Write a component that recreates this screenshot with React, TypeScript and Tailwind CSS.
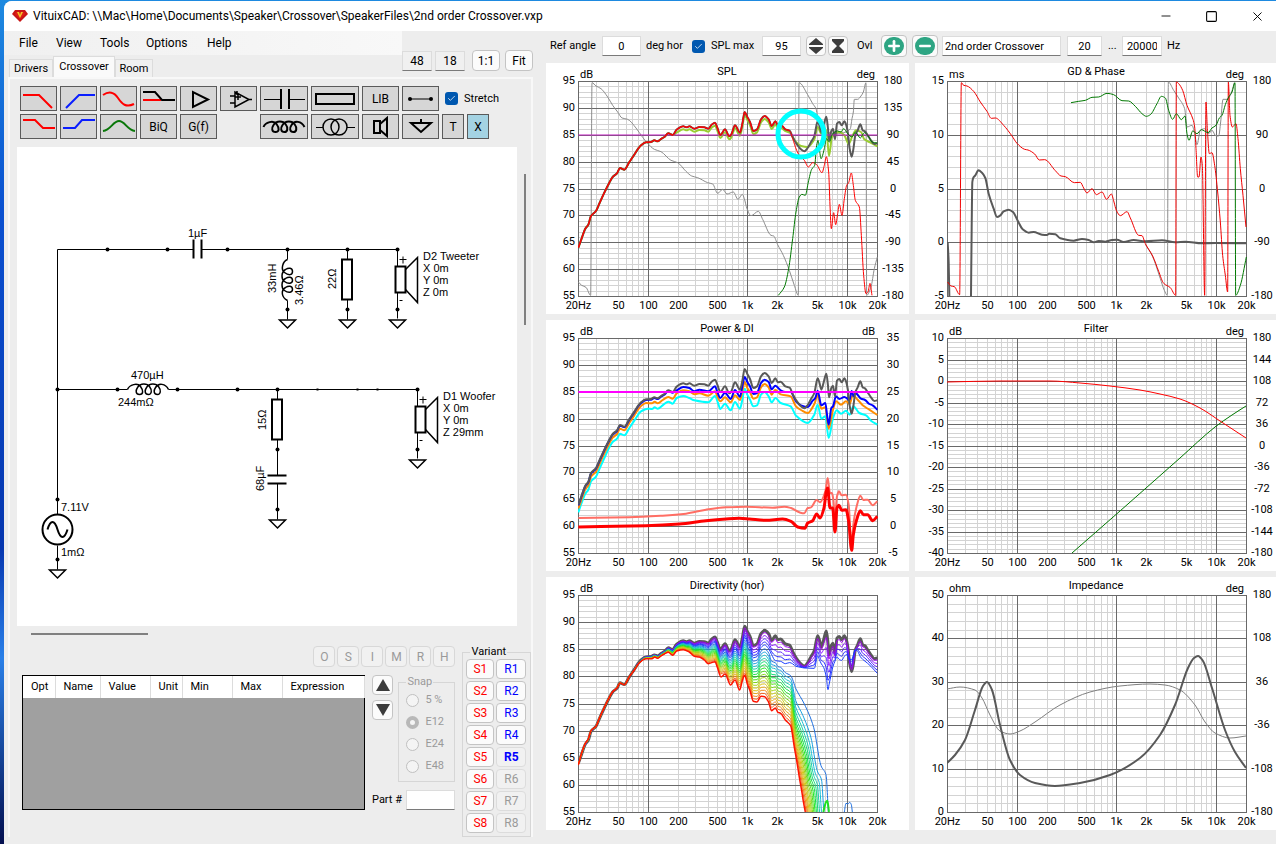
import type { ReactNode } from 'react'
import { Check, Minus, Plus, Square, X } from 'lucide-react'

type Point = [number, number]

// ---------- curve helpers ----------

const pts = (s: string): Point[] => s.trim().split(/\s+/).map((p) => p.split(',').map(Number) as Point)

// monotone cubic through the points, so peaks never overshoot
function smooth(p: Point[]) {
  const slope = (i: number) => (p[i + 1][1] - p[i][1]) / (p[i + 1][0] - p[i][0] || 1)
  const m = p.map((_, i) => {
    if (i === 0) return slope(0)
    if (i === p.length - 1) return slope(i - 1)
    const a = slope(i - 1)
    const b = slope(i)
    return a * b <= 0 ? 0 : (2 * a * b) / (a + b)
  })
  let d = `M${p[0][0]} ${p[0][1]}`
  for (let i = 1; i < p.length; i++) {
    const h = (p[i][0] - p[i - 1][0]) / 3
    d += `C${p[i - 1][0] + h} ${p[i - 1][1] + h * m[i - 1]} ${p[i][0] - h} ${p[i][1] - h * m[i]} ${p[i][0]} ${p[i][1]}`
  }
  return d
}

function at(p: Point[], x: number) {
  for (let i = 1; i < p.length; i++) {
    if (x <= p[i][0]) {
      const [x0, y0] = p[i - 1]
      const [x1, y1] = p[i]
      return y0 + ((y1 - y0) * (x - x0)) / (x1 - x0)
    }
  }
  return p[p.length - 1][1]
}

const shift = (p: Point[], dy: number) => p.map(([x, y]) => [x, y + dy] as Point)

// ---------- measured data ----------

const axial = pts(`97,557 106,532 118,500 127,488 135,462 150,447 160,425 175,392 190,362 200,345 213,334 222,318 235,323
250,300 265,278 275,262 285,250 300,241 315,240 325,235 335,238 345,231 355,225 367,214 380,219 392,203 412,193 422,196
430,193 445,200 460,195 475,196 487,200 497,188 507,182 514,197 523,219 537,202 550,223 556,217 567,190 582,212 589,185
596,150 604,165 612,180 622,207 633,202 645,172 656,162 668,172 677,192 688,178 696,190 704,188 718,202 731,206 740,225
750,243 765,262 775,268 785,258 795,240 805,222 815,178 820,190 826,212 833,190 841,164 846,200 849,235 856,207 861,200
867,232 873,185 880,180 887,190 895,178 901,190 906,215 911,260 917,284 922,262 928,220 935,205 943,187 950,205 957,208
965,220 975,235 985,246 994,244`)

const before = (p: Point[], x: number) => p.filter((q) => q[0] <= x)

const overlay = [
  ...before(axial, 380),
  ...shift(axial.filter((q) => q[0] > 380 && q[0] < 718), 9),
  ...pts(`718,207 731,212 750,240 765,252 785,255 805,232 815,195 826,215 838,200 843,220 849,282 858,225 867,215 880,210
895,220 908,245 920,220 930,205 945,210 955,232 970,240 985,248 994,253`),
]

const wooferSpl = [
  ...before(axial, 731),
  ...pts(`740,230 752,265 760,280 775,295 787,315 800,302 812,308 828,332 835,310 841,284 848,330 852,430 856,500 863,452
869,488 875,455 880,427 888,460 895,410 902,370 908,362 916,333 922,370 928,415 940,435 946,520 953,640 960,695 966,690
972,664 978,700`),
]

const tweeterSpl = pts(`697,700 715,675 728,620 740,530 750,450 760,405 768,397 778,400 787,360 797,322 806,310 812,250
816,235 820,260 825,290 835,260 841,230 850,240 860,215 875,207 885,210 893,200 905,215 918,225 928,210 943,228 955,212
967,222 978,240 994,243`)

const splPhase = pts(`97,660 107,670 120,676 134,700 138,62 150,72 165,80 185,105 200,130 215,150 228,168 245,172 270,198
290,226 305,244 325,262 345,269 375,295 395,302 420,328 437,342 455,347 485,362 500,366 515,394 530,382 543,396 562,390
576,412 589,397 595,410 603,440 615,461 637,448 650,472 675,520 683,522 695,548 712,580 730,625 745,670 757,700 759,62
785,98 800,125 810,140 815,165 822,190 840,210 870,215 900,210 913,200 918,170 922,150 925,112 935,112 945,102 952,90
960,62 962,700 975,675 985,620 994,585`)

const groupDelay = pts(`107,540 110,600 112,703`)
const groupDelay2 = pts(`177,703 179,500 181,360 184,347 190,340 199,325 210,332 220,348 230,395 245,440 255,465 265,460
275,448 290,443 303,450 318,478 332,502 350,512 365,510 390,518 405,519 412,515 430,517 445,529 485,536 510,531 530,534
545,541 560,537 580,539 600,534 615,533 635,540 665,534 700,538 750,535 790,541 820,539 870,544 910,543 1003,544`)
const wooferPhase = pts(`107,660 117,672 127,674 143,698 148,62 155,70 165,72 185,88 205,120 225,148 238,169 250,168 275,190
300,222 315,244 338,262 348,264 368,276 382,294 398,293 430,326 447,342 460,344 487,362 505,361 515,378 525,393 540,380
553,398 570,390 584,412 598,396 606,420 613,445 625,461 645,449 655,468 680,520 690,521 700,545 722,582 740,628 755,664
775,677 791,700 793,60 800,65 812,85 825,130 843,172 848,195 852,260 857,345 861,345 867,285 871,310 878,700 882,120
886,200 892,275 900,272 908,310 917,390 925,480 932,580 940,640 947,690 949,60 954,160 961,195 972,185 978,230 985,320
993,400 1002,495`)
const totalPhase = pts(`700,547 722,584 745,650 757,685 766,700 769,60 785,85 800,108 818,140 825,195 840,190 848,215 855,248
865,205 878,200 890,215 900,205 912,222 920,222 926,180 933,112 945,112 955,100 967,62`)
const tweeterPhase = pts(`477,122 500,118 520,115 540,106 560,105 585,94 605,98 630,116 650,117 670,133 690,155 703,163 715,158
735,125 748,103 760,108 770,145 782,172 793,155 808,173 819,162 825,215 831,235 842,207 855,215 868,203 888,212 900,198
912,190 922,168 930,160 940,128 950,105 960,90 969,62 971,700 985,670 1003,585`)

const listening = [
  ...shift(before(axial, 380), 5),
  ...pts(`392,217 412,207 430,210 445,220 460,215 487,220 507,205 514,222 523,240 537,224 554,243 567,216 582,236 589,205
596,177 604,192 612,205 622,228 633,225 645,195 656,185 668,192 677,214 688,203 704,217 718,222 734,222 750,250 765,262
785,267 800,248 808,240 815,218 826,262 838,255 843,290 848,320 856,270 861,265 870,235 880,243 895,237 911,245 917,219
923,235 928,225 945,242 957,246 970,258 980,262 994,275`),
]
const inRoom = [
  ...shift(before(axial, 300), 14),
  ...pts(`318,256 326,251 335,256 350,246 367,237 380,242 392,226 412,217 430,220 445,229 460,226 487,233 507,220 514,235
523,250 537,238 554,253 567,232 582,246 589,220 596,192 604,210 612,222 622,242 633,238 645,208 656,198 668,208 677,230
688,215 704,229 734,235 750,265 765,276 785,285 805,258 815,232 826,272 838,268 848,332 861,275 870,250 885,260 900,250
911,258 920,232 935,245 950,262 970,275 994,291`),
]
const power = pts(`97,583 106,557 118,527 127,515 135,490 150,476 160,453 175,420 190,388 200,372 213,362 222,347 235,352
250,330 265,308 285,280 305,272 318,273 326,268 335,272 350,262 367,251 380,257 392,240 412,234 430,240 445,247 487,253
507,234 516,255 523,273 537,257 554,277 567,252 582,272 589,245 596,212 604,230 612,245 622,265 633,262 645,230 656,222
668,235 677,253 688,240 704,255 734,265 750,293 785,315 805,290 815,260 826,302 838,295 848,360 861,300 872,277 885,287
900,278 911,290 922,265 940,285 960,292 975,308 994,320`)
const directivityIndexIn = pts(`97,600 250,598 350,593 420,587 480,575 540,568 600,566 680,569 715,566 735,570 760,583
775,586 785,570 795,568 812,546 822,553 838,520 845,480 852,525 858,525 862,545 867,600 873,535 879,520 887,532 900,530
908,560 917,690 922,620 932,565 943,533 952,546 965,545 980,562 994,550`)
const directivityIndex = pts(`97,627 300,623 400,618 480,608 540,603 580,601 610,603 660,607 710,603 735,610 755,627 777,631
785,615 800,608 812,588 822,600 834,570 841,520 845,510 852,570 860,570 867,642 873,570 879,562 887,577 900,575 908,610
917,697 922,650 932,605 943,578 952,590 965,590 980,608 994,595`)

const rear = pts(`97,573 106,540 118,508 127,495 135,470 150,457 160,433 175,400 190,370 200,353 213,342 222,327 235,332
250,308 265,288 280,266 300,254 318,254 326,249 334,253 345,246 355,240 367,235 380,244 392,231 412,227 430,234 445,247
460,249 475,258 487,269 507,263 514,280 525,309 537,300 554,333 567,318 581,348 589,320 596,304 604,330 612,350 622,382
633,384 645,367 656,368 668,385 677,410 688,402 696,415 704,418 718,438 734,455 745,520 753,565 760,610 767,650 772,682
778,714`)

const front = axial.map(([x, y]) => [x, 64 + (y - 58) * 1.01] as Point)

const sideTail = pts(`677,262 688,266 696,278 704,280 718,296 734,305 750,345 775,390 803,460 825,575 840,602 847,714`)
const rearTail = pts(`677,410 688,402 696,415 704,418 718,438 734,455 745,520 753,565 760,610 767,650 772,682 778,714`)
const flatTail = pts(`677,242 688,260 704,262 718,269 734,265 750,277 775,282 805,283 815,245 825,268 838,288 846,347 860,280
872,248 885,262 900,240 915,262 930,222 945,252 970,272 994,298`)

// angles whose response stays up across the band
function upper(t: number): Point[] {
  return front.map(([x, y]) => {
    const low = x < 677 ? y + (at(rear, x) - y) * 0.22 : at(flatTail, x)
    return [x, y + (low - y) * t]
  })
}

// angles that fall away above the crossover
function lower(t: number): Point[] {
  const mix = 0.28 + 0.72 * t
  const k = t ** 0.6
  const body = front.filter((q) => q[0] < 677).map(([x, y]) => [x, y + (at(rear, x) - y) * mix] as Point)
  const tail = sideTail.map(([x, y], i) => {
    const u = i < 6 ? t : k
    return [x + (rearTail[i][0] - x) * u, y + (rearTail[i][1] - y) * u] as Point
  })
  return [...body, ...tail]
}

const upperCurves: [number, string][] = [
  [0.14, '#a000f0'], [0.36, '#8a10ff'], [0.58, '#5a20ff'], [0.8, '#2a2aff'], [1, '#1a3cff'],
]
const lowerColors = [
  '#1e6fe0', '#1aa0e0', '#18c0d0', '#18d0a8', '#18dc78', '#18e048', '#20e820', '#50e018', '#80d818', '#a8d418', '#c8cc18',
  '#d8c018', '#e8a818', '#f08818', '#f06018',
]

const filterGain = pts('947,382 1000,381 1050,381 1080,383 1110,386 1140,390 1160,394 1180,399 1200,408 1220,421 1246,438')
const filterPhase = pts('1072,553 1120,511 1180,458 1215,427 1232,415 1246,406')
const impedance = pts(`947,763 955,755 965,740 975,710 983,686 987,682 992,690 1000,725 1010,760 1020,775 1035,783 1055,786
1080,783 1110,775 1140,758 1160,735 1175,705 1188,668 1194,658 1198,656 1203,661 1212,688 1225,730 1235,752 1246,768`)
const impedancePhase = pts(`947,689 960,687 975,690 982,698 990,715 1000,731 1010,734 1020,731 1035,722 1060,705 1090,692
1120,686 1150,684 1165,685 1180,690 1195,705 1205,722 1215,733 1230,738 1246,736`)

// ---------- charts ----------

function Curve({ p, color, width = 1 }: { p: Point[]; color: string; width?: number }) {
  return (
    <path
      d={smooth(p)}
      fill="none"
      stroke={color}
      strokeWidth={width}
      strokeLinejoin="round"
      vectorEffect="non-scaling-stroke"
    />
  )
}

const PLOT_X = 32
const PLOT_Y = 18
const PLOT_W = 299

const freqX = (f: number) => Math.round(PLOT_X + (Math.log10(f / 20) / 3) * PLOT_W) + 0.5

const gridFreqs = [30, 40, 50, 60, 70, 80, 90, 200, 300, 400, 500, 600, 700, 800, 900].concat(
  [2, 3, 4, 5, 6, 7, 8, 9].map((n) => n * 1000),
)
const freqLabels: [number, string][] = [
  [20, '20Hz'], [50, '50'], [100, '100'], [200, '200'], [500, '500'], [1000, '1k'], [2000, '2k'], [5000, '5k'],
  [10000, '10k'], [20000, '20k'],
]

type ChartProps = {
  title: string
  unit: string
  rightUnit?: string
  left: string[]
  right?: string[]
  minor: number
  width: number
  plotH: number
  transform: string
  children: ReactNode
  over?: ReactNode
}

function Chart({ title, unit, rightUnit, left, right = [], minor, width, plotH, transform, children, over }: ChartProps) {
  const rowY = (i: number, n: number) => Math.round(PLOT_Y + (plotH * i) / n) + 0.5
  const rows = left.length - 1
  const id = `clip-${title.replace(/\W/g, '')}`
  return (
    <section className="bg-white">
      <svg
        viewBox={`0 0 ${width} ${plotH + 36}`}
        className="block w-full font-[Roboto,sans-serif] text-[11px]"
        role="img"
        aria-label={title}
      >
        <clipPath id={id}>
          <rect x={PLOT_X} y={PLOT_Y} width={PLOT_W + 1} height={plotH + 1} />
        </clipPath>
        <g stroke="#d3d3d3">
          {gridFreqs.map((f) => (
            <line key={f} x1={freqX(f)} x2={freqX(f)} y1={PLOT_Y} y2={PLOT_Y + plotH} />
          ))}
          {Array.from({ length: rows * minor }, (_, i) => (
            <line key={i} x1={PLOT_X} x2={PLOT_X + PLOT_W} y1={rowY(i, rows * minor)} y2={rowY(i, rows * minor)} />
          ))}
        </g>
        <g stroke="#696969">
          {[100, 1000, 10000].map((f) => (
            <line key={f} x1={freqX(f)} x2={freqX(f)} y1={PLOT_Y} y2={PLOT_Y + plotH} />
          ))}
          {left.map((_, i) => (
            <line key={i} x1={PLOT_X} x2={PLOT_X + PLOT_W} y1={rowY(i, rows)} y2={rowY(i, rows)} />
          ))}
          <rect x={PLOT_X + 0.5} y={PLOT_Y + 0.5} width={PLOT_W} height={plotH} fill="none" />
        </g>
        <g clipPath={`url(#${id})`}>
          <g transform={transform}>{children}</g>
        </g>
        {over}
        <g fill="#000">
          <text x="181" y="12" textAnchor="middle">{title}</text>
          <text x="34" y="15">{unit}</text>
          {rightUnit && <text x="329" y="15" textAnchor="end">{rightUnit}</text>}
          {left.map((l, i) => (
            <text key={l} x="29" y={rowY(i, rows) + 2} textAnchor="end">{l}</text>
          ))}
          {right.map((l, i) => (
            <text key={l} x="347" y={rowY(i, right.length - 1) + 2} textAnchor="middle">{l}</text>
          ))}
          {freqLabels.map(([f, l]) => (
            <text key={l} x={freqX(f)} y={plotH + 31} textAnchor="middle">{l}</text>
          ))}
        </g>
      </svg>
    </section>
  )
}

const splScale = ['95', '90', '85', '80', '75', '70', '65', '60', '55']

function Charts() {
  return (
    <div className="grid grid-cols-[363fr_361fr] gap-[6px]">
      <Chart
        title="SPL"
        unit="dB"
        rightUnit="deg"
        left={splScale}
        right={['180', '135', '90', '45', '0', '-45', '-90', '-135', '-180']}
        minor={5}
        width={363}
        plotH={215}
        transform="translate(0 -1) scale(0.33333)"
        over={<circle cx="255" cy="71" r="23" fill="none" stroke="#00ffff" strokeWidth="5" />}
      >
        <Curve p={splPhase} color="#8c8c8c" />
        <Curve p={overlay} color="#9acd32" width={2} />
        <Curve p={axial} color="#595959" width={2} />
        <Curve p={[[97, 219], [994, 219]]} color="#c020c0" />
        <Curve p={before(wooferSpl, 731)} color="#dc1414" width={1.5} />
        <Curve p={wooferSpl} color="#ff0000" />
        <Curve p={tweeterSpl} color="#007800" />
      </Chart>
      <Chart
        title="GD & Phase"
        unit="ms"
        rightUnit="deg"
        left={['15', '10', '5', '0', '-5']}
        right={['180', '90', '0', '-90', '-180']}
        minor={5}
        width={361}
        plotH={215}
        transform="translate(-3 -1) scale(0.33333)"
      >
        <Curve p={totalPhase} color="#8c8c8c" />
        <Curve p={groupDelay} color="#595959" width={2} />
        <Curve p={groupDelay2} color="#595959" width={2} />
        <Curve p={wooferPhase} color="#f00000" />
        <Curve p={tweeterPhase} color="#007800" />
      </Chart>
      <Chart
        title="Power & DI"
        unit="dB"
        rightUnit="dB"
        left={splScale}
        right={['35', '30', '25', '20', '15', '10', '5', '0', '-5']}
        minor={5}
        width={363}
        plotH={215}
        transform="translate(0 -2) scale(0.33333)"
      >
        <Curve p={power} color="#00ffff" width={2} />
        <Curve p={inRoom} color="#ff8c00" width={2} />
        <Curve p={listening} color="#0000ff" width={2} />
        <Curve p={shift(axial, 3)} color="#595959" width={2} />
        <Curve p={[[97, 222], [994, 222]]} color="#ff00ff" width={2} />
        <Curve p={directivityIndexIn} color="#ff6e64" width={2} />
        <Curve p={directivityIndex} color="#ff0000" width={3} />
      </Chart>
      <Chart
        title="Filter"
        unit="dB"
        rightUnit="deg"
        left={['10', '5', '0', '-5', '-10', '-15', '-20', '-25', '-30', '-35', '-40']}
        right={['180', '144', '108', '72', '36', '0', '-36', '-72', '-108', '-144', '-180']}
        minor={5}
        width={361}
        plotH={215}
        transform="translate(-915 -320)"
      >
        <Curve p={filterPhase} color="#007800" />
        <Curve p={filterGain} color="#ff0000" />
      </Chart>
      <Chart
        title="Directivity (hor)"
        unit="dB"
        left={splScale}
        minor={5}
        width={363}
        plotH={217}
        transform="translate(0 -3) scale(0.33333)"
      >
        <Curve p={front} color="#595959" width={3} />
        {upperCurves.map(([t, c]) => (
          <Curve key={c} p={upper(t)} color={c} />
        ))}
        {lowerColors.map((c, i) => (
          <Curve key={c} p={lower(i / 15)} color={c} />
        ))}
        <Curve p={pts('832,714 840,684 844,680 849,714')} color="#20e020" width={2} />
        <Curve p={pts('895,714 900,688 906,690 911,685 916,692 919,714')} color="#1e6fe0" />
        <Curve p={rear} color="#ff1400" width={1.5} />
      </Chart>
      <Chart
        title="Impedance"
        unit="ohm"
        rightUnit="deg"
        left={['50', '40', '30', '20', '10', '0']}
        right={['180', '108', '36', '-36', '-108', '-180']}
        minor={5}
        width={361}
        plotH={217}
        transform="translate(-915 -577)"
      >
        <Curve p={impedancePhase} color="#808080" />
        <Curve p={impedance} color="#595959" width={2} />
      </Chart>
    </div>
  )
}

// ---------- schematic ----------

function Ground({ x, y }: { x: number; y: number }) {
  return <path d={`M${x - 8} ${y + 0.5}h16l-8 8z`} fill="none" stroke="#000" strokeWidth="1.5" />
}

function Speaker({ x, y }: { x: number; y: number }) {
  return (
    <g fill="none" stroke="#000" strokeWidth="1.5">
      <path d={`M${x} ${y}v17M${x} ${y + 43}v26`} strokeWidth="1" />
      <rect x={x - 2} y={y + 17} width="10" height="26" strokeWidth="2" />
      <path d={`M${x + 8} ${y + 20}l12 -12v45l-12 -13`} />
      <path d={`M${x + 2} ${y + 10}h7M${x + 5.5} ${y + 7}v7M${x + 2} ${y + 51}h3`} strokeWidth="1" />
    </g>
  )
}

const coilPath =
  'M0 0C2 -5 10 -7 13 -3C16 1 16 5 12 5C8 5 8 1 10 -2C13 -7 20 -6 22 -3C25 1 24 5 21 5C17 5 17 1 19 -2C22 -7 29 -6 31 -3C34 1 33 5 30 5C26 5 26 1 28 -2C31 -7 38 -6 41 0'

const wireDots: Point[] = [
  [107, 249], [167, 249], [227, 249], [287, 249], [347, 249], [397, 249], [287, 309], [347, 309], [397, 309],
  [57, 389], [117, 389], [177, 389], [237, 389], [277, 389], [417, 389], [277, 449], [417, 449], [277, 509],
  [57, 499], [57, 559],
]

function Schematic() {
  return (
    <svg
      viewBox="17 147 500 479"
      className="block w-full bg-white font-['Liberation_Sans',Arial,sans-serif] text-[11px]"
      role="img"
      aria-label="Crossover schematic"
    >
      <g transform="translate(0.5 0.5)">
        <path
          d="M57 249H193M201 249H397M57 249V514M57 545V569M57 389H127M168 389H417M287 249V259M287 300V319M347 249V259M347 299V319M277 389V399M277 439V475M277 483V519"
          fill="none"
          stroke="#000"
        />
        <path d="M193 239V258M201 239V258M267 475H286M267 483H286" stroke="#000" strokeWidth="2" />
        <path d={coilPath} transform="translate(127 389)" fill="none" stroke="#000" strokeWidth="1.5" />
        <path d={coilPath} transform="translate(287 259) rotate(90) scale(1 -1)" fill="none" stroke="#000" strokeWidth="1.5" />
        <rect x="341.5" y="259" width="10" height="40" fill="#fff" stroke="#000" strokeWidth="2" />
        <rect x="271.5" y="399" width="10" height="40" fill="#fff" stroke="#000" strokeWidth="2" />
        <circle cx="57" cy="529" r="15" fill="none" stroke="#000" strokeWidth="2" />
        <path d="M47 529C50 519 54 519 57 529S64 539 67 529" fill="none" stroke="#000" strokeWidth="2" />
        <Speaker x={397} y={249} />
        <Speaker x={417} y={389} />
        {wireDots.map(([x, y]) => (
          <circle key={`${x}-${y}`} cx={x} cy={y} r="2" />
        ))}
        {[317, 357, 377].map((x) => (
          <rect key={x} x={x - 1} y="388" width="2" height="2" />
        ))}
        {[[287, 319], [347, 319], [397, 319], [417, 459], [277, 519], [57, 569]].map(([x, y]) => (
          <Ground key={`${x}-${y}`} x={x} y={y} />
        ))}
      </g>
      <text x="188" y="237">1µF</text>
      <text x="131" y="379">470µH</text>
      <text x="118" y="406">244mΩ</text>
      <text x="61" y="511">7.11V</text>
      <text x="61" y="556">1mΩ</text>
      <text transform="translate(276 293) rotate(-90)">33mH</text>
      <text transform="translate(303 305) rotate(-90)">3.46Ω</text>
      <text transform="translate(336 289) rotate(-90)">22Ω</text>
      <text transform="translate(266 430) rotate(-90)">15Ω</text>
      <text transform="translate(264 491) rotate(-90)">68µF</text>
      {['D2 Tweeter', 'X 0m', 'Y 0m', 'Z 0m'].map((t, i) => (
        <text key={t} x="423" y={260 + i * 12}>{t}</text>
      ))}
      {['D1 Woofer', 'X 0m', 'Y 0m', 'Z 29mm'].map((t, i) => (
        <text key={t} x="443" y={400 + i * 12}>{t}</text>
      ))}
    </svg>
  )
}

// ---------- toolbar ----------

function Tool({ label, wide, children }: { label: string; wide?: boolean; children: ReactNode }) {
  return (
    <button
      aria-label={label}
      className={`flex h-[25px] items-center justify-center border border-[#5a5a5a] bg-[#d6d6d6] ${wide ? 'w-12' : 'w-[37px]'}`}
    >
      {children}
    </button>
  )
}

function Glyph({ d, color = '#000', w = 2, wide }: { d: string; color?: string; w?: number; wide?: boolean }) {
  return (
    <svg
      width={wide ? 46 : 35}
      height="23"
      viewBox={wide ? '0 0 46 23' : '0 0 35 23'}
      fill="none"
      stroke={color}
      strokeWidth={w}
      aria-hidden="true"
    >
      <path d={d} />
    </svg>
  )
}

function ToolBar() {
  return (
    <div className="flex flex-col gap-[3px] text-[12px]">
      <div className="flex items-center gap-[3px]">
        <Tool label="Low pass"><Glyph d="M2 8H18L31 21" color="#f00" /></Tool>
        <Tool label="High pass"><Glyph d="M5 21L18 8H34" color="#0a1eff" /></Tool>
        <Tool label="All pass"><Glyph d="M2 8C8 4 13 5 17 11S25 21 33 17" color="#f00" /></Tool>
        <Tool label="Shelving">
          <svg width="35" height="23" viewBox="0 0 35 23" fill="none" strokeWidth="2" aria-hidden="true">
            <path d="M2 13H20" stroke="#f00" />
            <path d="M2 5H14L21 13H34" stroke="#000" />
          </svg>
        </Tool>
        <Tool label="Buffer"><Glyph d="M12 5V20L27 12.5Z" /></Tool>
        <Tool label="Op amp"><Glyph d="M14 5V20L28 12.5ZM9 9H14M9 16H14M28 12.5H31M14 10H20M17 7V13M16 4V8" w={1.5} /></Tool>
        <Tool label="Capacitor" wide>
          <svg width="46" height="23" viewBox="0 0 46 23" stroke="#000" aria-hidden="true">
            <path d="M3 12.5H20M28 12.5H44" />
            <path d="M20 2V22M28 2V22" strokeWidth="2" />
          </svg>
        </Tool>
        <Tool label="Resistor" wide><Glyph d="M4 7H42V17H4Z" wide /></Tool>
        <Tool label="Library">LIB</Tool>
        <Tool label="Wire">
          <svg width="35" height="23" viewBox="0 0 35 23" aria-hidden="true">
            <path d="M7 12H28" stroke="#000" />
            <circle cx="7" cy="12" r="2" />
            <circle cx="28" cy="12" r="2" />
          </svg>
        </Tool>
        <label className="ml-[3px] flex items-center gap-[6px] text-[11px]">
          <Tick />
          Stretch
        </label>
      </div>
      <div className="flex items-center gap-[3px]">
        <Tool label="Low shelf"><Glyph d="M2 5H14L22 13H34" color="#f00" /></Tool>
        <Tool label="High shelf"><Glyph d="M2 13H14L21 5H34" color="#0a1eff" /></Tool>
        <Tool label="Peak"><Glyph d="M2 16C10 15 12 6 18 6S26 15 34 16" color="#0a780a" /></Tool>
        <Tool label="Biquad">BiQ</Tool>
        <Tool label="Transfer function">G(f)</Tool>
        <div className="w-[37px]" />
        <Tool label="Inductor" wide>
          <svg width="46" height="23" viewBox="0 0 46 23" aria-hidden="true">
            <path d={coilPath} transform="translate(2.5 12)" fill="none" stroke="#000" strokeWidth="2" />
          </svg>
        </Tool>
        <Tool label="Transformer" wide>
          <svg width="46" height="23" viewBox="0 0 46 23" fill="none" stroke="#000" strokeWidth="1.5" aria-hidden="true">
            <circle cx="19" cy="12" r="8" />
            <circle cx="27" cy="12" r="8" />
            <path d="M4 12.5H11M35 12.5H43" strokeWidth="1" />
          </svg>
        </Tool>
        <Tool label="Driver"><Glyph d="M11 6H17V18H11ZM17 9L24 3V21L17 15" /></Tool>
        <Tool label="Ground"><Glyph d="M8 8H28L18 17ZM18 4V8" /></Tool>
        <button className="h-[25px] w-[22px] border border-[#5a5a5a] bg-[#d6d6d6]">T</button>
        <button className="h-[25px] w-[22px] border border-[#5a5a5a] bg-[#a4d3e3]">X</button>
      </div>
    </div>
  )
}

function Tick() {
  return (
    <span className="relative flex size-[13px]">
      <input type="checkbox" defaultChecked className="size-[13px] appearance-none rounded-[3px] bg-[#0058b0]" />
      <Check size={9} color="#fff" className="pointer-events-none absolute left-[2px] top-[2px]" />
    </span>
  )
}

const fieldClass = 'h-[20px] border border-[#dcdcdc] border-b-[#7a7a7a] bg-white px-1'
const pushClass = 'flex items-center justify-center rounded-[4px] border border-[#c4c4c4] bg-[#fbfbfb]'

function ChartBar() {
  return (
    <div className="flex h-8 items-center pb-[2px] pl-1">
      <label htmlFor="ref">Ref angle</label>
      <input id="ref" defaultValue="0" className={`${fieldClass} ml-[6px] w-[39px] text-center`} />
      <span className="ml-[5px] w-[42px]">deg hor</span>
      <label className="ml-[4px] flex w-[66px] items-center gap-[6px]">
        <Tick />
        SPL max
      </label>
      <input aria-label="SPL max value" defaultValue="95" className={`${fieldClass} ml-[4px] w-[39px] text-center`} />
      <button aria-label="Expand scale" className={`${pushClass} ml-[5px] size-5`}>
        <svg width="16" height="18" viewBox="0 0 16 18" fill="#3c3c3c" aria-hidden="true">
          <path d="M8 1L15 7V8H1V7ZM8 17L15 11V10H1V11Z" />
        </svg>
      </button>
      <button aria-label="Compress scale" className={`${pushClass} ml-[2px] size-5`}>
        <svg width="16" height="18" viewBox="0 0 16 18" fill="#3c3c3c" aria-hidden="true">
          <path d="M2 2H14V4L9 9L14 14V16H2V14L7 9L2 4Z" />
        </svg>
      </button>
      <span className="ml-[9px] w-[19px]">Ovl</span>
      <button aria-label="Add overlay" className={`${pushClass} ml-[5px] h-[22px] w-[26px]`}>
        <span className="flex h-[18px] w-5 items-center justify-center rounded-full bg-[#2ea583]">
          <Plus size={16} color="#fff" strokeWidth={4} />
        </span>
      </button>
      <button aria-label="Remove overlay" className={`${pushClass} ml-[5px] h-[22px] w-[26px]`}>
        <span className="flex h-[18px] w-5 items-center justify-center rounded-full bg-[#2ea583]">
          <Minus size={16} color="#fff" strokeWidth={4} />
        </span>
      </button>
      <input aria-label="Overlay name" defaultValue="2nd order Crossover" className={`${fieldClass} ml-[4px] w-[119px] px-[2px]`} />
      <input aria-label="From frequency" defaultValue="20" className={`${fieldClass} ml-[6px] w-[35px] text-center`} />
      <span className="ml-[6px] w-[10px]">...</span>
      <input aria-label="To frequency" defaultValue="20000" className={`${fieldClass} ml-[4px] w-[40px] px-0 text-center`} />
      <span className="ml-[5px]">Hz</span>
    </div>
  )
}

// ---------- lower left ----------

const columns: [string, string][] = [
  ['Opt', 'w-[32px]'], ['Name', 'w-[45px]'], ['Value', 'w-[50px]'], ['Unit', 'w-[32px]'], ['Min', 'w-[50px]'],
  ['Max', 'w-[50px]'], ['Expression', 'w-[82px]'],
]

function Bottom() {
  return (
    <div className="flex pl-[12px] pt-[6px]">
      <div className="w-[436px]">
        <div className="flex justify-end gap-[2px] pt-[5px]">
          {['O', 'S', 'I', 'M', 'R', 'H'].map((c) => (
            <button key={c} disabled className="h-[21px] w-[22px] rounded-[4px] border border-[#d8d8d8] bg-[#f1f1f1] text-[12px] text-[#9a9a9a]">
              {c}
            </button>
          ))}
        </div>
        <div className="mt-2 flex">
          <div className="h-[135px] w-[343px] border border-black bg-[#a0a0a0]">
            <table className="w-full table-fixed border-collapse bg-white text-left">
              <thead>
                <tr className="h-[22px]">
                  {columns.map(([name, w]) => (
                    <th key={name} className={`${w} border-r border-[#dcdcdc] p-0 pl-2 font-normal`}>{name}</th>
                  ))}
                </tr>
              </thead>
            </table>
          </div>
          <div className="ml-[7px] flex flex-1 flex-col justify-between">
            <div className="flex justify-between">
              <div className="flex flex-col gap-[5px]">
                <button aria-label="Move up" className={`${pushClass} h-5 w-[21px]`}>
                  <svg width="14" height="12" viewBox="0 0 14 12" fill="#3c3c3c" aria-hidden="true"><path d="M7 0L14 12H0Z" /></svg>
                </button>
                <button aria-label="Move down" className={`${pushClass} h-5 w-[21px]`}>
                  <svg width="14" height="12" viewBox="0 0 14 12" fill="#3c3c3c" aria-hidden="true"><path d="M0 0H14L7 12Z" /></svg>
                </button>
              </div>
              <fieldset disabled className="h-[107px] w-[57px] border border-[#d6d6d6] pl-[7px] text-[#9a9a9a]">
                <legend className="px-[1px] leading-[14px]">Snap</legend>
                <div className="flex flex-col gap-[6px] pt-[3px]">
                  {['5 %', 'E12', 'E24', 'E48'].map((s) => (
                    <label key={s} className="flex h-4 items-center gap-[6px]">
                      <input
                        type="radio"
                        name="snap"
                        defaultChecked={s === 'E12'}
                        className="size-[13px] appearance-none rounded-full border border-[#c0c0c0] bg-[#f4f4f4] checked:border-4 checked:border-[#b8b8b8]"
                      />
                      {s}
                    </label>
                  ))}
                </div>
              </fieldset>
            </div>
            <div className="flex items-center justify-between">
              <label htmlFor="part">Part #</label>
              <input id="part" className={`${fieldClass} w-[49px]`} />
            </div>
          </div>
        </div>
      </div>
      <fieldset className="ml-[7px] mt-1 w-[69px] border border-[#d6d6d6] pb-[3px] pl-[3px] text-[12px]">
        <legend className="ml-[4px] px-[1px] text-[11px] leading-[14px]">Variant</legend>
        <div className="grid grid-cols-[28px_30px] gap-x-[2px] gap-y-[2px]">
          {[1, 2, 3, 4, 5, 6, 7, 8].map((n) => (
            <div key={n} className="contents">
              <button className={`${pushClass} h-5 text-[#ff0000]`}>S{n}</button>
              <button
                disabled={n > 5}
                className={`flex h-5 items-center justify-center rounded-[4px] border ${
                  n > 4 ? 'border-[#dcdcdc] bg-[#f1f1f1]' : 'border-[#c4c4c4] bg-[#fbfbfb]'
                } ${n > 5 ? 'text-[#9a9a9a]' : 'text-[#0000ff]'} ${n === 5 ? 'font-bold' : ''}`}
              >
                R{n}
              </button>
            </div>
          ))}
        </div>
      </fieldset>
    </div>
  )
}

function Logo() {
  return (
    <svg width="16" height="12" viewBox="0 0 16 12" aria-hidden="true">
      <path d="M3 0H13L16 4L8 12L0 4Z" fill="#c81414" />
      <path d="M4 2H12L13 4L8 9L3 4Z" fill="#e01e14" />
      <path d="M5 2H7L8 5L9 2H11L8 8Z" fill="#f0c828" />
    </svg>
  )
}

export default function App() {
  return (
    <div className="min-h-screen bg-[linear-gradient(180deg,#1e8ae0,#0a50d0_25%,#0838b0_65%,#2a80e8_78%,#041050)] pl-1 pt-px font-[Roboto,'Noto_Sans',sans-serif] text-[11px] leading-[14px] text-black">
      <div className="min-h-[calc(100vh-1px)] overflow-hidden rounded-tl-lg bg-[#ededed]">
        <header className="flex h-[30px] items-center bg-white pl-2 pr-[11px]">
          <Logo />
          <h1 className="ml-[5px] flex-1 whitespace-nowrap text-[12px]">
            VituixCAD: \\Mac\Home\Documents\Speaker\Crossover\SpeakerFiles\2nd order Crossover.vxp
          </h1>
          <div className="flex items-center gap-[32px]">
            <button aria-label="Minimize"><Minus size={14} strokeWidth={1.5} /></button>
            <button aria-label="Maximize"><Square size={13} strokeWidth={2} /></button>
            <button aria-label="Close"><X size={15} strokeWidth={1.5} /></button>
          </div>
        </header>
        <div className="flex">
          <div className="w-[532px] shrink-0">
            <div className="flex">
              <div className="flex-1">
                <nav className="flex h-6 items-center bg-linear-to-r from-[#f0f0f0] to-[#f8f8f8] pl-[15px] text-[12px]">
                  <a href="#file" className="w-[37px]">File</a>
                  <a href="#view" className="w-[44px]">View</a>
                  <a href="#tools" className="w-[46px]">Tools</a>
                  <a href="#options" className="w-[61px]">Options</a>
                  <a href="#help">Help</a>
                </nav>
                <div role="tablist" className="flex h-[22px] items-end pl-[5px]">
                  <button role="tab" className="h-[18px] w-[44px] border border-b-0 border-[#dcdcdc] bg-[#f0f0f0]">Drivers</button>
                  <button role="tab" aria-selected="true" className="h-[21px] w-[62px] border border-b-0 border-[#dcdcdc] bg-[#fafafa]">Crossover</button>
                  <button role="tab" className="h-[18px] w-[38px] border border-b-0 border-[#dcdcdc] bg-[#f0f0f0]">Room</button>
                </div>
              </div>
              <div className="flex items-center gap-[3px] pr-[3px] pt-[13px] text-[12px]">
                <button className="h-5 w-[30px] border border-[#dcdcdc] border-b-[#7a7a7a] bg-[#f0f0f0]">48</button>
                <button className="h-5 w-[30px] border border-[#dcdcdc] border-b-[#7a7a7a] bg-[#f0f0f0]">18</button>
                <button className={`${pushClass} ml-1 h-[21px] w-[28px]`}>1:1</button>
                <button className={`${pushClass} ml-[2px] h-[21px] w-[28px]`}>Fit</button>
              </div>
            </div>
            <main className="ml-1 mr-[3px] border-2 border-b-0 border-[#f8f8f8]">
              <div className="pb-2 pl-[10px] pt-[7px]">
                <ToolBar />
              </div>
              <div className="flex pl-[7px]">
                <div className="w-[500px]">
                  <Schematic />
                </div>
                <div className="ml-[7px] mt-[27px] h-[151px] w-[2px] bg-[#808080]" />
              </div>
              <div className="ml-[21px] mt-[7px] h-[2px] w-[117px] bg-[#808080]" />
              <Bottom />
            </main>
          </div>
          <div className="min-w-0 flex-1 pl-[10px]">
            <ChartBar />
            <Charts />
          </div>
        </div>
      </div>
    </div>
  )
}
